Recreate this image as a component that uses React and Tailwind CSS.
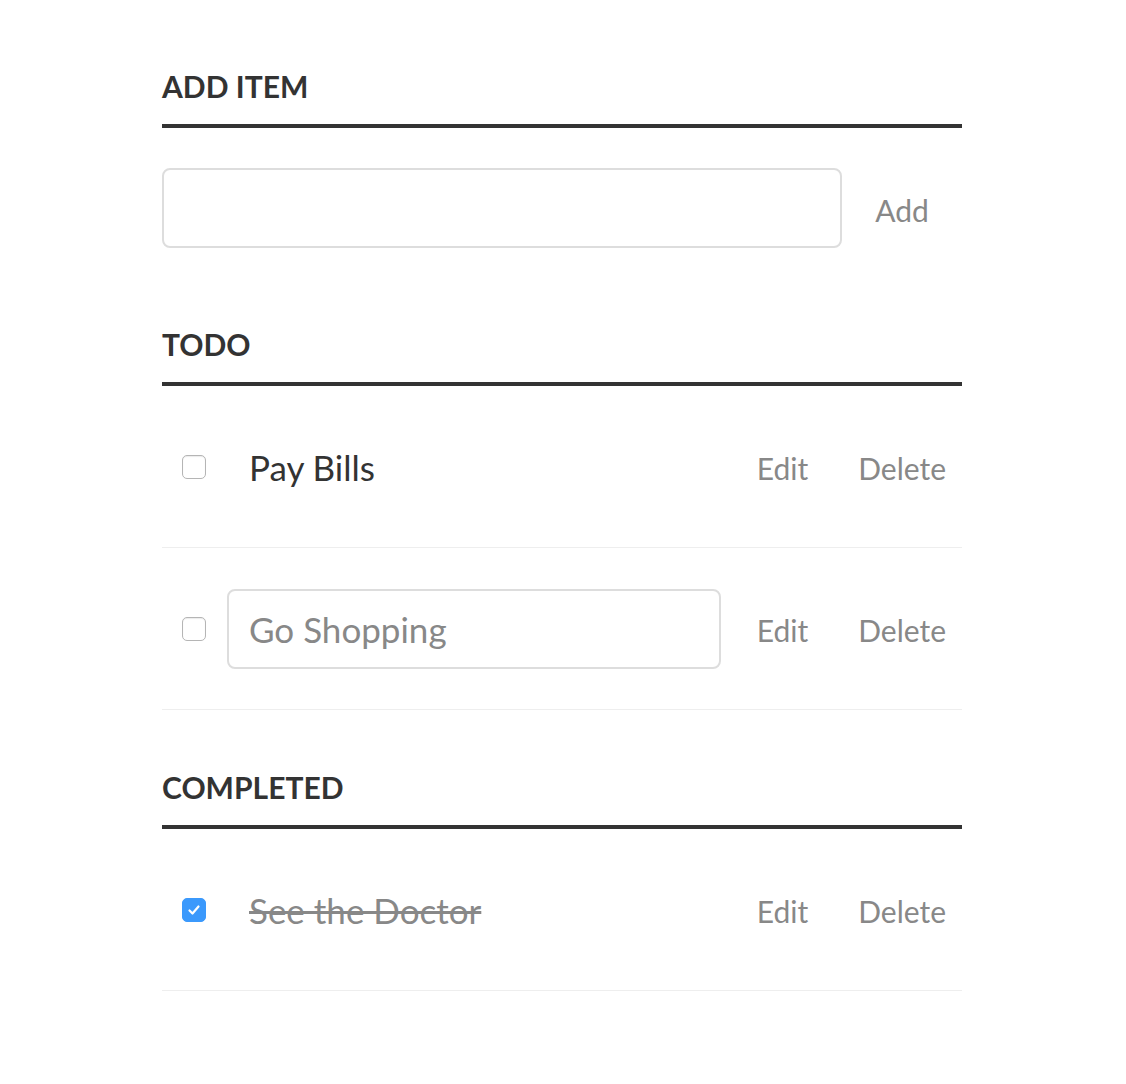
import { useState } from 'react';

const font = { fontFamily: 'Lato, "Open Sans", sans-serif' };

function Heading({ children, className = '' }) {
  return (
    <h3
      className={`text-[30px] leading-[36px] font-bold uppercase text-[#333] pt-[1px] pb-[20px] border-b-4 border-[#333] ${className}`}
    >
      {children}
    </h3>
  );
}

function Checkbox({ checked, onChange }) {
  return (
    <button
      onClick={onChange}
      className={`w-[24px] h-[24px] shrink-0 rounded-[5px] flex items-center justify-center ${
        checked
          ? 'bg-[#3b99fc] border border-[#3b99fc]'
          : 'bg-white border border-[#b5b5b5] shadow-[inset_0_1px_1px_rgba(0,0,0,0.08)]'
      }`}
    >
      {checked && (
        <svg width="14" height="14" viewBox="0 0 14 14" fill="none">
          <path d="M2.5 7.5 L5.5 10.5 L11.5 3.5" stroke="white" strokeWidth="2.2" strokeLinecap="round" strokeLinejoin="round" />
        </svg>
      )}
    </button>
  );
}

function TaskRow({ task, onToggle }) {
  return (
    <li className="h-[162px] flex items-center pl-[20px] pr-[16px] border-b border-[#eee]">
      <Checkbox checked={task.done} onChange={onToggle} />
      {task.editing ? (
        <input
          defaultValue={task.text}
          className="ml-[21px] w-[494px] h-[80px] border-2 border-[#ddd] rounded-lg px-[20px] pt-[1px] text-[35px] text-[#888] outline-none"
        />
      ) : (
        <span
          className={`ml-[21px] w-[494px] pl-[22px] pt-[1px] text-[35px] ${
            task.done ? 'text-[#888] line-through' : 'text-[#333]'
          }`}
        >
          {task.text}
        </span>
      )}
      <div className="ml-auto pt-[3px] flex items-center gap-[50px] text-[30px] text-[#888]">
        <button>Edit</button>
        <button>Delete</button>
      </div>
    </li>
  );
}

export default function App() {
  const [tasks, setTasks] = useState([
    { id: 1, text: 'Pay Bills', done: false, editing: false },
    { id: 2, text: 'Go Shopping', done: false, editing: true },
    { id: 3, text: 'See the Doctor', done: true, editing: false },
  ]);

  const toggle = (id) =>
    setTasks(tasks.map((t) => (t.id === id ? { ...t, done: !t.done } : t)));

  return (
    <div className="min-h-[1084px] bg-white" style={font}>
      <div className="w-[800px] ml-[162px] pt-[67px]">
        <Heading>Add Item</Heading>
        <div className="flex items-center mt-[40px]">
          <input className="w-[680px] h-[80px] border-2 border-[#ddd] rounded-lg px-[20px] text-[30px] outline-none" />
          <button className="flex-1 pt-[4px] text-center text-[30px] text-[#888]">Add</button>
        </div>

        <Heading className="mt-[77px]">Todo</Heading>
        <ul>
          {tasks.filter((t) => !t.done).map((t) => (
            <TaskRow key={t.id} task={t} onToggle={() => toggle(t.id)} />
          ))}
        </ul>

        <Heading className="mt-[58px]">Completed</Heading>
        <ul>
          {tasks.filter((t) => t.done).map((t) => (
            <TaskRow key={t.id} task={t} onToggle={() => toggle(t.id)} />
          ))}
        </ul>
      </div>
    </div>
  );
}
